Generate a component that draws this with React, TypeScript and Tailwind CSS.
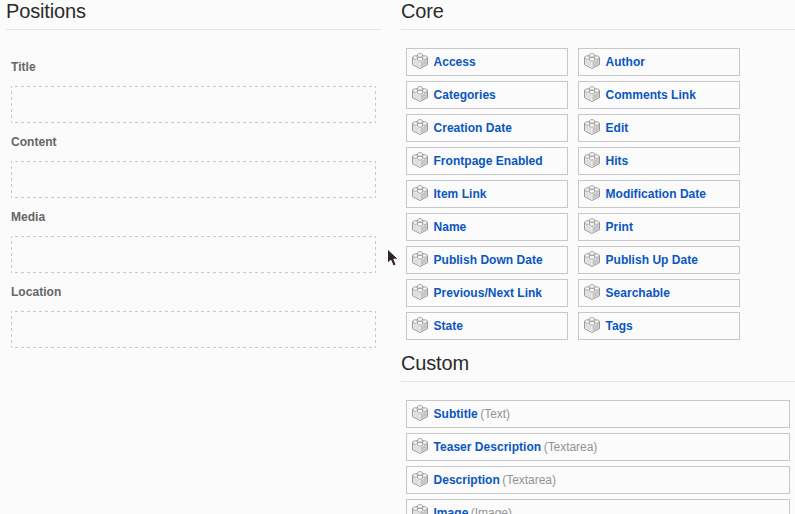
import React from "react";

function BrickIcon() {
  return (
    <svg width="16" height="16" viewBox="0 0 16 16" className="-mt-0.5 shrink-0" aria-hidden="true">
      <path d="M.5 4.500 8 1.500l7.500 3v7.200L8 15.500.5 11.700Z" fill="#f0f0f0" stroke="#8e8e8e" strokeWidth=".9" strokeLinejoin="round" />
      <path d="M1.200 5.600 8 9v5.800l-6.800-3.500Z" fill="#dfdfdf" />
      <path d="M14.800 5.600 8 9v5.800l6.800-3.500Z" fill="#c6c6c6" />
      <path d="M1.200 5.500 8 8.900l6.800-3.400M8 8.900v5.900" fill="none" stroke="#fafafa" strokeWidth=".8" />
      <g fill="#f7f7f7" stroke="#929292" strokeWidth=".8">
        <path d="M5.600 1.700v1.500c0 1.300 4.800 1.300 4.800 0V1.700c0-1.500-4.800-1.500-4.800 0Z" />
        <path d="M.9 3.900v1.300c0 1.500 4.600 1.500 4.600 0V3.900c0-1.400-4.600-1.400-4.600 0Z" />
        <path d="M10.500 3.900v1.300c0 1.500 4.600 1.500 4.600 0V3.900c0-1.400-4.600-1.400-4.600 0Z" />
        <path d="M5.500 5.500v1.500c0 1.600 5 1.600 5 0V5.500c0-1.500-5-1.500-5 0Z" />
      </g>
    </svg>
  );
}

function Heading({ children }: { children: React.ReactNode }) {
  return (
    <h2 className="h-[30px] border-b border-[#e5e5e5] text-[20px] leading-[22px] tracking-[-0.15px] text-[#2a2a2a]">{children}</h2>
  );
}

function Item({ name, type }: { name: string; type?: string }) {
  return (
    <li className="flex h-7 items-center border border-[#c8c8c8] pl-[5px] text-[12px] leading-[18px] tracking-[0.03px] whitespace-nowrap">
      <BrickIcon />
      <span className="ml-[5.5px] font-bold text-[#0a56c2]">{name}</span>
      {type && <span className="ml-[2.5px] tracking-[-0.05px] text-[#939393]">({type})</span>}
    </li>
  );
}

const positions = ["Title", "Content", "Media", "Location"];

const core = [
  "Access", "Author",
  "Categories", "Comments Link",
  "Creation Date", "Edit",
  "Frontpage Enabled", "Hits",
  "Item Link", "Modification Date",
  "Name", "Print",
  "Publish Down Date", "Publish Up Date",
  "Previous/Next Link", "Searchable",
  "State", "Tags",
];

const custom = [
  { name: "Subtitle", type: "Text" },
  { name: "Teaser Description", type: "Textarea" },
  { name: "Description", type: "Textarea" },
  { name: "Image", type: "Image" },
];

export default function App() {
  return (
    <main className="relative flex h-[514px] w-[795px] overflow-hidden bg-[#fbfbfb] font-['Liberation_Sans',Arial,sans-serif]">
      <section className="ml-[6px] w-[376px] shrink-0">
        <Heading>Positions</Heading>
        <div className="pt-[27px] pr-[6px] pl-[5px]">
          {positions.map((p) => (
            <div key={p} className="h-[75px]">
              <h3 className="text-[12px] leading-5 font-bold tracking-[0.03px] text-[#666]">{p}</h3>
              <div className="mt-[9px] h-[37px] [background-image:linear-gradient(90deg,#c8c8c8_50%,transparent_50%),linear-gradient(90deg,#c8c8c8_50%,transparent_50%),linear-gradient(180deg,#c8c8c8_50%,transparent_50%),linear-gradient(180deg,#c8c8c8_50%,transparent_50%)] [background-position:4px_0,4px_36px,0_5px,364px_5px] [background-repeat:repeat-x,repeat-x,repeat-y,repeat-y] [background-size:6px_1px,6px_1px,1px_6px,1px_6px]" />
            </div>
          ))}
        </div>
      </section>
      <section className="ml-[19px] w-[394px] shrink-0">
        <Heading>Core</Heading>
        <ul className="mt-[18px] ml-[5px] grid grid-cols-[162px_162px] gap-x-[10px] gap-y-[5px]">
          {core.map((name) => (
            <Item key={name} name={name} />
          ))}
        </ul>
        <div className="mt-[12px]">
          <Heading>Custom</Heading>
        </div>
        <ul className="mt-[18px] mr-[5px] ml-[5px] flex flex-col gap-[5px]">
          {custom.map((f) => (
            <Item key={f.name} name={f.name} type={f.type} />
          ))}
        </ul>
      </section>
      <svg className="absolute top-[248px] left-[386px]" width="14" height="20" viewBox="0 0 14 20" aria-hidden="true">
        <path d="M1.500 1v14.200l3.300-3 2.400 5.700 3-1.200-2.400-5.500h4.600Z" fill="#30262a" stroke="#fff" strokeWidth="1" />
      </svg>
    </main>
  );
}
